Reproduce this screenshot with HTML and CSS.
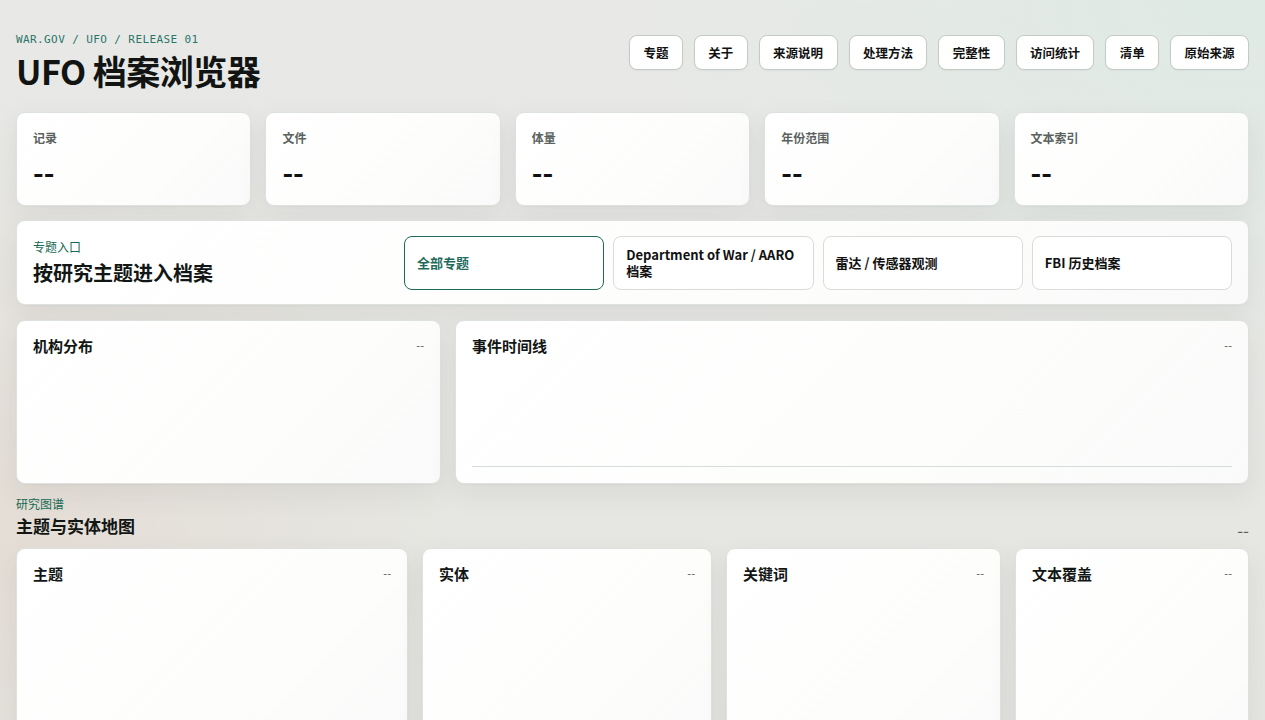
FILE: index.html
```html
<!DOCTYPE html>
<html lang="zh-CN">
<head>
<meta charset="utf-8">
<title>UFO 档案浏览器</title>
<link rel="stylesheet" href="styles.css">
</head>
<body>
<div class="page">
  <header class="top">
    <div class="brand">
      <div class="crumb">WAR.GOV / UFO / RELEASE 01</div>
      <h1 class="title">UFO 档案浏览器</h1>
    </div>
    <nav class="nav">
      <a class="nav-btn">专题</a>
      <a class="nav-btn">关于</a>
      <a class="nav-btn">来源说明</a>
      <a class="nav-btn">处理方法</a>
      <a class="nav-btn">完整性</a>
      <a class="nav-btn">访问统计</a>
      <a class="nav-btn">清单</a>
      <a class="nav-btn">原始来源</a>
    </nav>
  </header>

  <section class="stats">
    <div class="card stat"><div class="stat-label">记录</div><div class="stat-value">--</div></div>
    <div class="card stat"><div class="stat-label">文件</div><div class="stat-value">--</div></div>
    <div class="card stat"><div class="stat-label">体量</div><div class="stat-value">--</div></div>
    <div class="card stat"><div class="stat-label">年份范围</div><div class="stat-value">--</div></div>
    <div class="card stat"><div class="stat-label">文本索引</div><div class="stat-value">--</div></div>
  </section>

  <section class="card topics">
    <div class="topics-text">
      <div class="eyebrow">专题入口</div>
      <h2 class="topics-title">按研究主题进入档案</h2>
    </div>
    <div class="topic-list">
      <button class="topic active">全部专题</button>
      <button class="topic">Department of War / AARO 档案</button>
      <button class="topic">雷达 / 传感器观测</button>
      <button class="topic">FBI 历史档案</button>
    </div>
  </section>

  <section class="charts">
    <div class="card panel">
      <div class="panel-head"><h3 class="panel-title">机构分布</h3><span class="panel-meta">--</span></div>
      <div class="panel-body"></div>
    </div>
    <div class="card panel">
      <div class="panel-head"><h3 class="panel-title">事件时间线</h3><span class="panel-meta">--</span></div>
      <div class="panel-body timeline"></div>
    </div>
  </section>

  <section class="map">
    <div class="section-head">
      <div>
        <div class="eyebrow small">研究图谱</div>
        <h2 class="section-title">主题与实体地图</h2>
      </div>
      <span class="section-meta">--</span>
    </div>
    <div class="map-grid">
      <div class="card panel tall">
        <div class="panel-head"><h3 class="panel-title">主题</h3><span class="panel-meta">--</span></div>
      </div>
      <div class="card panel tall">
        <div class="panel-head"><h3 class="panel-title">实体</h3><span class="panel-meta">--</span></div>
      </div>
      <div class="card panel tall">
        <div class="panel-head"><h3 class="panel-title">关键词</h3><span class="panel-meta">--</span></div>
      </div>
      <div class="card panel tall">
        <div class="panel-head"><h3 class="panel-title">文本覆盖</h3><span class="panel-meta">--</span></div>
      </div>
    </div>
  </section>
</div>
</body>
</html>
```

FILE: styles.css
```css
* { box-sizing: border-box; }

html, body {
  margin: 0;
  padding: 0;
}

body {
  font-family: "Noto Sans CJK SC", "Noto Sans", sans-serif;
  color: #121614;
  background:
    radial-gradient(ellipse 900px 500px at 100% 0%, rgba(222, 234, 228, 0.9), rgba(222, 234, 228, 0) 70%),
    radial-gradient(ellipse 700px 600px at 0% 70%, rgba(228, 220, 212, 0.9), rgba(228, 220, 212, 0) 70%),
    linear-gradient(180deg, #e8e9e6 0%, #e5e6e2 100%);
  min-height: 720px;
  overflow: hidden;
}

.page {
  padding: 32px 16px 0;
  display: flex;
  flex-direction: column;
  gap: 14px;
}

.top {
  display: flex;
  justify-content: space-between;
  align-items: flex-start;
  margin-bottom: 7px;
}

.crumb {
  font-family: "DejaVu Sans Mono", "Liberation Mono", monospace;
  font-size: 11px;
  line-height: 16px;
  letter-spacing: 0.4px;
  color: #2a7469;
}

.title {
  margin: 3px 0 0;
  font-size: 34px;
  line-height: 40px;
  font-weight: 700;
  letter-spacing: -0.5px;
  color: #111413;
}

.nav {
  display: flex;
  gap: 11px;
  margin-top: 3px;
}

.nav-btn {
  display: flex;
  align-items: center;
  height: 35px;
  padding: 0 13.4px;
  border: 1px solid #c3cbc6;
  border-radius: 8px;
  background: #fff;
  font-size: 12.5px;
  font-weight: 700;
  color: #111;
  box-shadow: 0 1px 2px rgba(0, 0, 0, 0.04);
}

.card {
  background: linear-gradient(135deg, #ffffff 0%, #fdfdfc 60%, #f9faf9 100%);
  border: 1px solid #dde2df;
  border-radius: 9px;
  box-shadow: 0 10px 28px rgba(60, 70, 65, 0.08), 0 1px 2px rgba(0, 0, 0, 0.03);
}

.stats {
  display: grid;
  grid-template-columns: repeat(5, 1fr);
  gap: 14px;
}

.stat {
  height: 94px;
  padding: 17px 16px 0;
}

.stat-label {
  font-size: 12px;
  line-height: 16px;
  font-weight: 700;
  color: #5b625e;
}

.stat-value {
  margin-top: 9px;
  font-size: 29px;
  line-height: 32px;
  font-weight: 700;
  color: #111;
}

.topics {
  display: flex;
  align-items: center;
  height: 85px;
  padding: 0 16px;
}

.topics-text {
  flex: 1;
}

.eyebrow {
  font-size: 12px;
  line-height: 16px;
  color: #176a55;
}

.eyebrow.small {
  line-height: 12px;
}

.topics-title {
  margin: 4px 0 0;
  font-size: 20px;
  line-height: 28px;
  font-weight: 700;
}

.topic-list {
  display: grid;
  grid-template-columns: repeat(4, 1fr);
  gap: 9px;
  width: 828px;
}

.topic {
  height: 54px;
  padding: 0 12px;
  border: 1px solid #d8ddda;
  border-radius: 8px;
  background: #fff;
  font-family: inherit;
  font-size: 13px;
  line-height: 16px;
  font-weight: 700;
  color: #111;
  text-align: left;
  display: flex;
  align-items: center;
}

.topic.active {
  border-color: #1f6b5b;
  color: #1f6b5b;
}

.charts {
  display: grid;
  grid-template-columns: 425px 1fr;
  gap: 14px;
  margin-top: 1px;
}

.panel {
  height: 164px;
  padding: 15px 16px 16px;
  display: flex;
  flex-direction: column;
}

.panel-head {
  display: flex;
  justify-content: space-between;
  align-items: flex-start;
}

.panel-title {
  margin: 0;
  font-size: 15px;
  line-height: 20px;
  font-weight: 700;
}

.panel-meta {
  font-size: 11px;
  line-height: 18px;
  color: #505853;
}

.panel-body {
  flex: 1;
}

.panel-body.timeline {
  border-bottom: 1px solid #d6dcd9;
}

.map {
  display: flex;
  flex-direction: column;
  gap: 10px;
}

.section-head {
  display: flex;
  justify-content: space-between;
  align-items: flex-end;
}

.section-title {
  margin: 4px 0 0;
  font-size: 17px;
  line-height: 24px;
  font-weight: 700;
}

.section-meta {
  font-size: 17px;
  line-height: 16px;
  color: #5a615d;
}

.map-grid {
  display: grid;
  grid-template-columns: 392px 290px 275px 1fr;
  gap: 14px;
}

.panel.tall {
  height: 220px;
  padding-top: 15px;
}
```
